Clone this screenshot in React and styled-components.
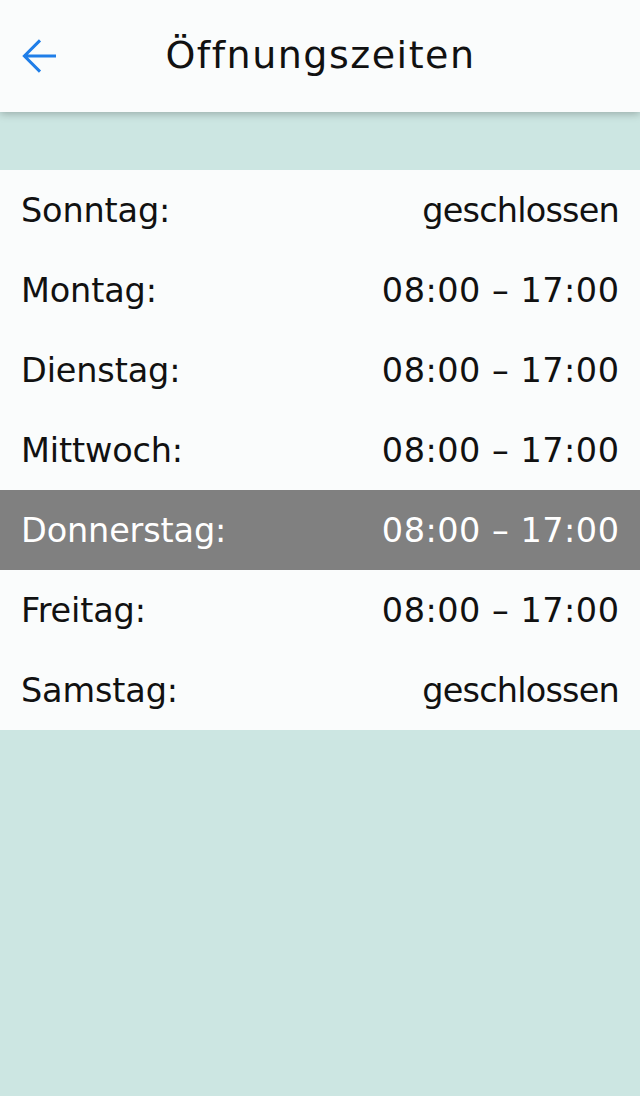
import React from 'react';
import styled, { createGlobalStyle } from 'styled-components';

const GlobalStyle = createGlobalStyle`
  html, body {
    margin: 0;
    padding: 0;
    background: #cce6e2;
    font-family: "DejaVu Sans", "Liberation Sans", sans-serif;
  }
`;

const Screen = styled.div`
  min-height: 1096px;
  background: #cce6e2;
  display: flex;
  flex-direction: column;
`;

const Header = styled.header`
  position: relative;
  height: 112px;
  background: #fafcfc;
  display: flex;
  align-items: center;
  justify-content: center;
  box-shadow: 0 2px 8px rgba(0, 0, 0, 0.25);
  z-index: 1;
`;

const BackButton = styled.button`
  position: absolute;
  left: 16px;
  top: 32px;
  width: 48px;
  height: 48px;
  padding: 0;
  border: none;
  background: transparent;
  display: flex;
  align-items: center;
  justify-content: center;
  cursor: pointer;
`;

const Title = styled.h1`
  margin: 0;
  font-size: 38px;
  font-weight: normal;
  letter-spacing: 1.5px;
  color: #111;
  line-height: 1;
  padding: 0 0 2px 1px;
`;

const List = styled.ul`
  list-style: none;
  margin: 58px 0 0;
  padding: 0;
  background: #fafcfc;
`;

const Row = styled.li`
  height: 80px;
  padding: 0 21px 0 21px;
  display: flex;
  align-items: center;
  justify-content: space-between;
  font-size: 33.5px;
  background: ${p => (p.$today ? '#808080' : 'transparent')};
  color: ${p => (p.$today ? '#ffffff' : '#111111')};
`;

const Day = styled.span`
  letter-spacing: -0.15px;
`;

const Hours = styled.span`
  letter-spacing: ${p => (p.$closed ? '-0.8px' : '0.5px')};
  margin-right: ${p => (p.$closed ? '0' : '-0.5px')};
`;

const days = [
  ['Sonntag:', 'geschlossen'],
  ['Montag:', '08:00 – 17:00'],
  ['Dienstag:', '08:00 – 17:00'],
  ['Mittwoch:', '08:00 – 17:00'],
  ['Donnerstag:', '08:00 – 17:00'],
  ['Freitag:', '08:00 – 17:00'],
  ['Samstag:', 'geschlossen'],
];

const BackIcon = () => (
  <svg width="48" height="48" viewBox="0 0 24 24" fill="none">
    <path d="M20 12H4.8M12 4.2L4.2 12 12 19.8" stroke="#1f7ee8" strokeWidth="1.5" />
  </svg>
);

const App = () => (
  <Screen>
    <GlobalStyle />
    <Header>
      <BackButton aria-label="Zurück">
        <BackIcon />
      </BackButton>
      <Title>Öffnungszeiten</Title>
    </Header>
    <List>
      {days.map(([day, hours], i) => (
        <Row key={day} $today={i === 4}>
          <Day>{day}</Day>
          <Hours $closed={hours === 'geschlossen'}>{hours}</Hours>
        </Row>
      ))}
    </List>
  </Screen>
);

export default App;
